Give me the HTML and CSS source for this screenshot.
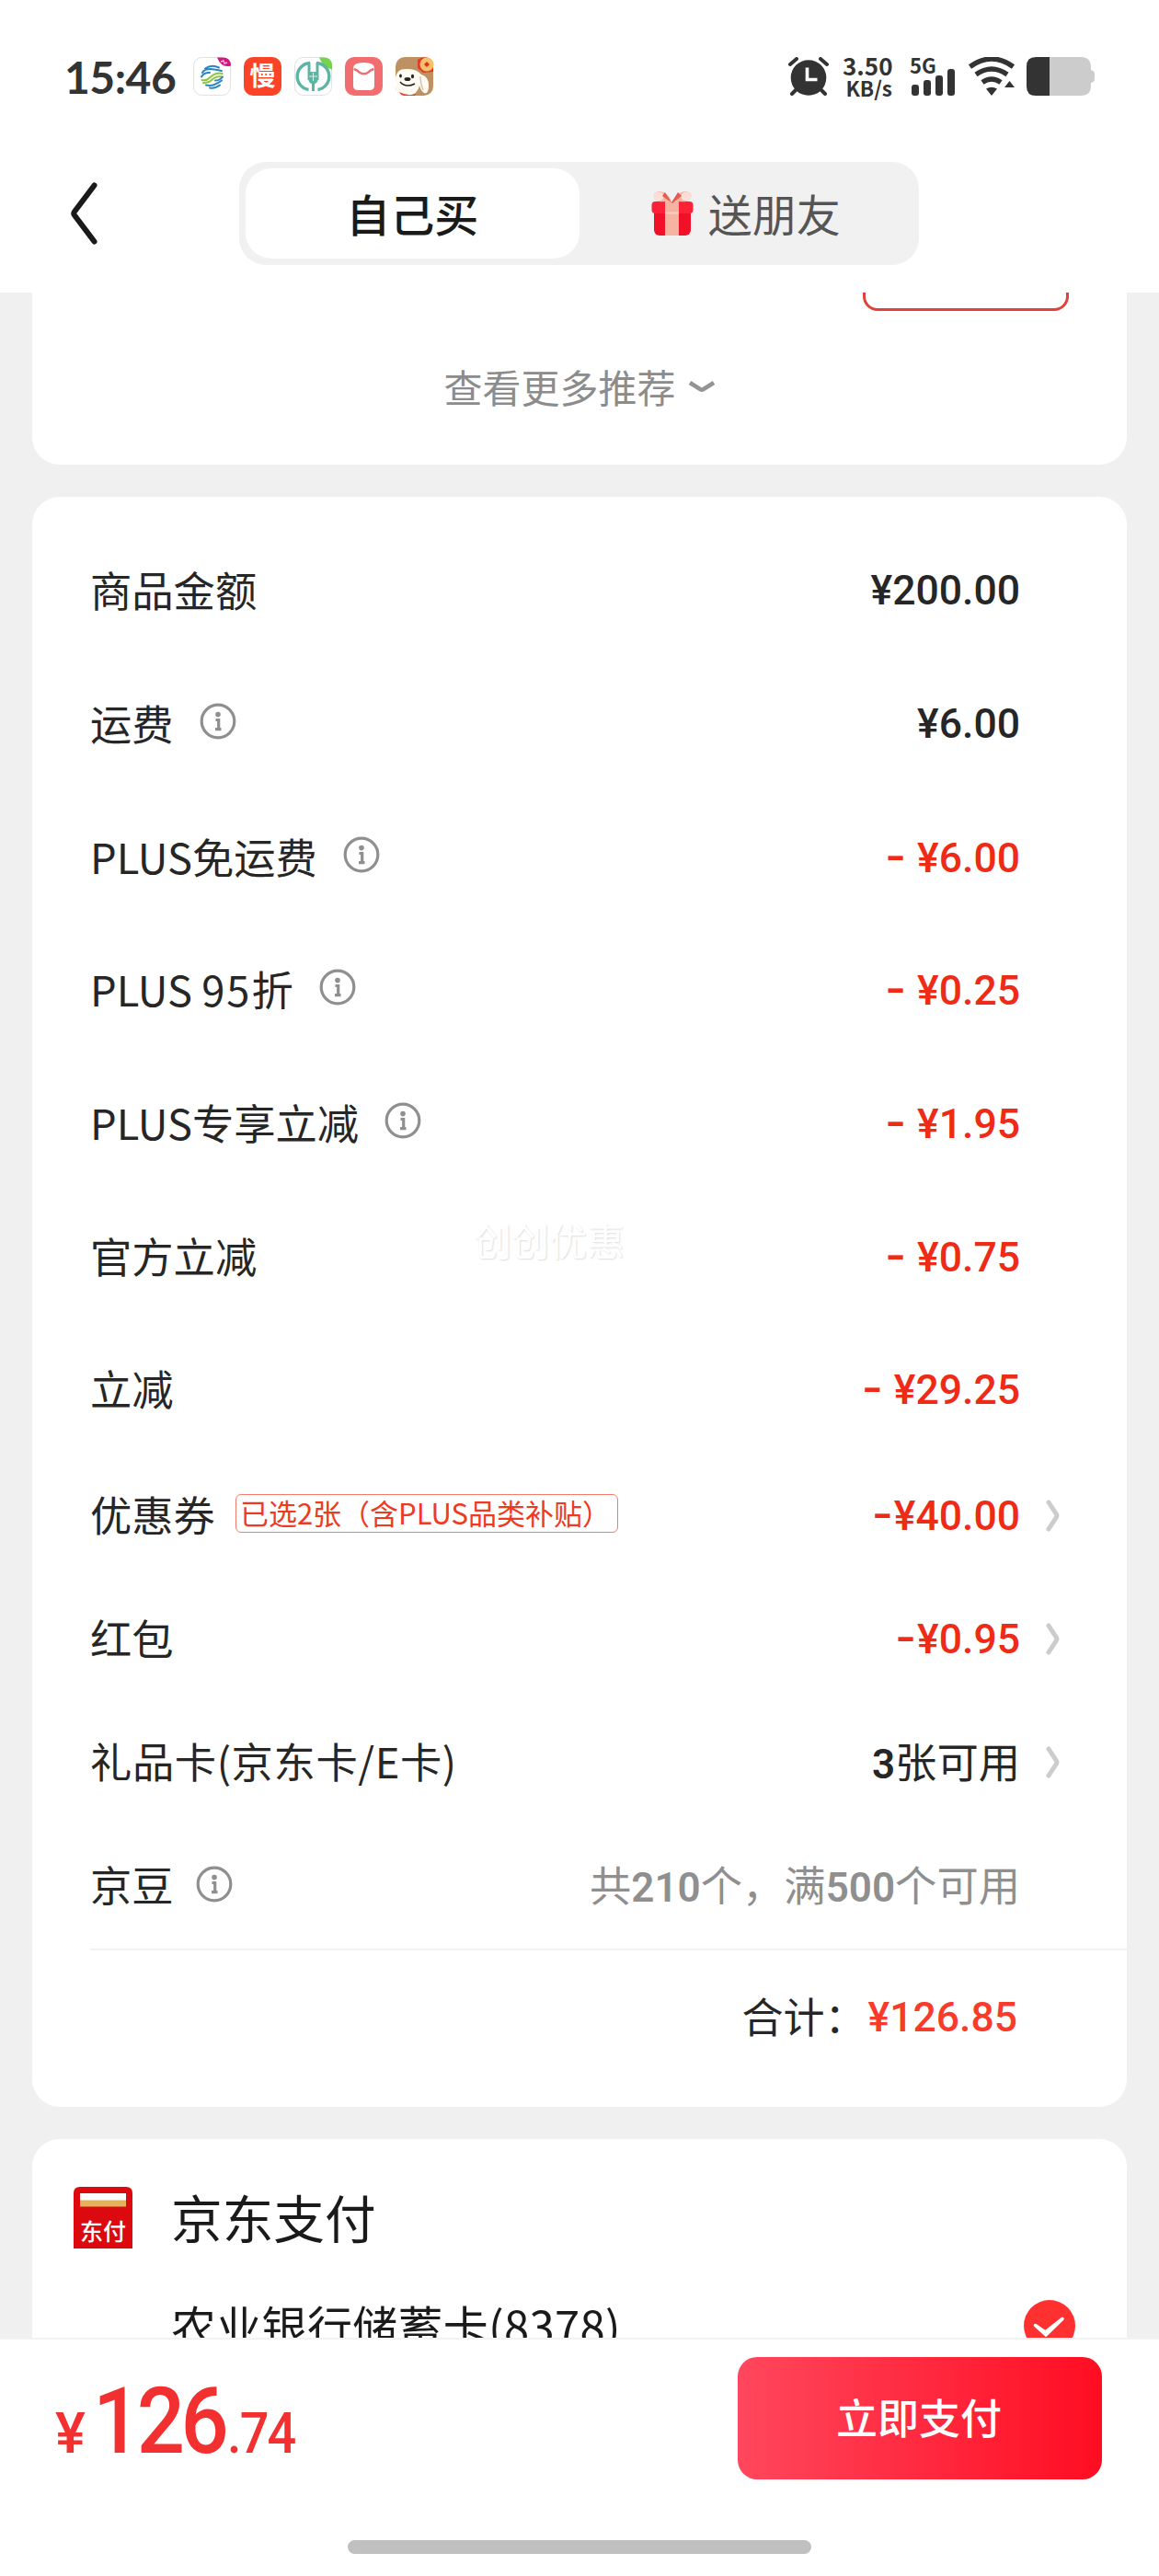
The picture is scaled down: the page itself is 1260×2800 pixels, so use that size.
FILE: index.html
```html
<!DOCTYPE html>
<html lang="zh-CN">

<head>
  <meta charset="UTF-8">
  <meta name="viewport" content="width=device-width, initial-scale=1.0">
  <title>确认订单</title>
  <link rel="stylesheet" href="styles.css">
</head>

<body>
  <svg class="sprite" aria-hidden="true">
    <symbol id="info" viewBox="0 0 40 40">
      <circle cx="20" cy="20" r="17.800" fill="none" stroke="#8f8f8f" stroke-width="3.200" />
      <circle cx="20" cy="12.600" r="2.800" fill="#8f8f8f" />
      <path d="M17.500 18.500h3.200v9.500M17 28.600h6.500" fill="none" stroke="#8f8f8f" stroke-width="3.200" />
    </symbol>
    <symbol id="arrow" viewBox="0 0 15 35">
      <path d="M3 3l8.300 12.700q1.200 1.800 0 3.600L3 32" fill="none" stroke="#ccc" stroke-width="5" stroke-linecap="round" />
    </symbol>
  </svg>

  <header class="header">
    <div class="status">
      <span class="status-time">15:46</span>
      <div class="status-apps">
        <svg viewBox="0 0 41 42">
          <rect x=".5" y=".5" width="40" height="41" rx="9" fill="#fff" stroke="#e2e2e2" />
          <path d="M26 .5h6q9 0 9 9-10 3-15-9z" fill="#d5147f" />
          <path d="M30 5l3-1 1 3 3-1" fill="none" stroke="#f6b5d8" stroke-width="1.4" />
          <g fill="none" stroke-width="2" stroke-linecap="round">
            <path d="M13 12.500q7-5 15-1M10 17q2-4 9-4 8 1 12 2M9 21.500q3-5 9-4.500" stroke="#2a85c2" />
            <path d="M9.500 25q5 1 8.500-2.500t7-4.500 6.500 0M11 28q6 0 9-3t6-3.500 5.500 0" stroke="#8ec63f" />
            <path d="M24 25.500q5 0 8-4M14 30.500q5 1 9-.5t8-4.500M18 33.500q6 1 11-3" stroke="#2a85c2" />
          </g>
        </svg>
        <svg viewBox="0 0 41 42">
          <rect width="41" height="42" rx="10" fill="#fb4327" />
          <text x="20.500" y="31" text-anchor="middle" class="app-man">慢</text>
        </svg>
        <svg viewBox="0 0 41 42">
          <rect x=".5" y=".5" width="40" height="41" rx="9" fill="#fff" stroke="#e2e2e2" />
          <path d="M27 .5h5q9 0 9 9v4Q31 11 27 .5z" fill="#76d24b" />
          <path d="M17 6.500a14.600 14.600 0 0 0-1.500 29M24 6.500a14.600 14.600 0 0 1 1.500 29" fill="none" stroke="#5fb5a4" stroke-width="3.400" />
          <path d="M20.500 17v20M16 6v19M25 6v19" fill="none" stroke="#5fb5a4" stroke-width="3" />
          <path d="M15.500 16h10v9q0 3-5 5-5-2-5-5z" fill="#5fb5a4" />
          <path d="M20.500 17v9M16 21h9" stroke="#d9efe9" stroke-width="1" />
        </svg>
        <svg viewBox="0 0 41 42">
          <rect width="41" height="42" rx="10" fill="#f26d70" />
          <path d="M9 12q0-6 11.500-6T32 12v19q0 5-5 5H14q-5 0-5-5z" fill="#fff" />
          <path d="M9.500 13q4 1 6 3.500 5 3.500 10 0 2-2.500 6-3.500" fill="none" stroke="#f26d70" stroke-width="2.400" />
        </svg>
        <svg viewBox="0 0 41 42">
          <rect width="41" height="42" rx="10" fill="#bd9161" />
          <path d="M0 22q2-10 12-9 10-1 16 6 8 2 8 12t-5 8q-4-3-5-8-2 10-12 11H9Q0 40 0 32z" fill="#fffaf2" />
          <path d="M27 21q0 8 3 15" fill="none" stroke="#d9c3a6" stroke-width="1.500" />
          <path d="M4 38q9 5 18 2l-1 2H10q-4 0-6-4z" fill="#e63b2e" />
          <path d="M24 3Q29-1 36 1q5 2 5 8v7l-11 1-6-5z" fill="#e23b2a" />
          <circle cx="34" cy="8" r="7.500" fill="#f6c269" />
          <path d="M34 5l3 3-3 3-3-3z" fill="#d83325" />
          <ellipse cx="13" cy="24" rx="3.500" ry="2" fill="#252525" />
          <ellipse cx="5.500" cy="20.500" rx="1.400" ry="2" fill="#252525" />
          <ellipse cx="18.500" cy="21" rx="1.600" ry="2.200" fill="#252525" />
          <path d="M5 27q6 7 16 2" fill="none" stroke="#252525" stroke-width="1.400" />
        </svg>
      </div>
      <div class="status-right">
        <svg class="ico-alarm" viewBox="0 0 44 42">
          <circle cx="22" cy="22.500" r="19.300" fill="#333" />
          <path d="M2 8l7-6M42 8l-7-6M9 35l-5 5M35 35l5 5" stroke="#333" stroke-width="4" stroke-linecap="round" />
          <path d="M20.500 11.500v13h11" fill="none" stroke="#fff" stroke-width="3.600" />
        </svg>
        <div class="net-speed"><span>3.50</span><span>KB/s</span></div>
        <div class="signal">
          <span class="signal-5g">5G</span>
          <i class="b1"></i><i class="b2"></i><i class="b3"></i><i class="b4"></i>
        </div>
        <svg class="ico-wifi" viewBox="0 0 52 42">
          <path d="M2.500 10.500Q26-6.500 49.500 10.500M9 19q17-12 34 0M16 27.500q10-7 20 0" fill="none" stroke="#333" stroke-width="5.400" />
          <path d="M20 34.500q6-3.500 12 0l-6 7.500zM40 33l5.500-7L51 33z" fill="#333" />
        </svg>
        <svg class="ico-battery" viewBox="0 0 74 42">
          <path d="M25 0h34q11 0 11 11v3q4 1 4 4v6q0 3-4 4v3q0 11-11 11H25z" fill="#ccc" />
          <path d="M10 0h15v42H10Q0 42 0 32V10Q0 0 10 0z" fill="#333" />
        </svg>
      </div>
    </div>

    <nav class="nav">
      <svg class="nav-back" viewBox="0 0 30 68">
        <path d="M26.500 3.500L5 32q-1.500 2 0 4l21.500 28.500" fill="none" stroke="#1a1a1a" stroke-width="6" stroke-linecap="round" stroke-linejoin="round" />
      </svg>
      <div class="tabs">
        <a class="tab is-active">自己买</a>
        <a class="tab">
          <svg class="ico-gift" viewBox="0 0 46 50">
            <rect x="3" y="17" width="40" height="32" rx="6" fill="#f01028" />
            <rect x=".5" y="12" width="45" height="13" rx="4" fill="#fb2238" />
            <rect x="15" y="12" width="15" height="37" fill="#f5b3a2" />
            <path d="M15 24.500h15" stroke="#f9cfc4" stroke-width="2" />
            <path d="M22 11Q9 14 4 10q-4-8 5-9 8 0 13 10zM24 11q13 3 18-1 4-8-5-9-8 0-13 10z" fill="#f7b4a5" />
            <ellipse cx="8" cy="6.500" rx="5.500" ry="5" fill="#fbded6" />
            <ellipse cx="38" cy="6.500" rx="5.500" ry="5" fill="#fbded6" />
            <path d="M15 2l7 11L29 2l4 4-10 8-11-8z" fill="#e45b4f" />
          </svg>
          <span>送朋友</span>
        </a>
      </div>
    </nav>
  </header>

  <main class="content">
    <section class="card recommend">
      <div class="recommend-btn"></div>
      <a class="more"><span>查看更多推荐</span>
        <svg viewBox="0 0 30 14">
          <path d="M2 3l11.500 7.200q1.500.8 3 0L28 3" fill="none" stroke="#949494" stroke-width="4.600" />
        </svg>
      </a>
    </section>

    <section class="card bill">
      <div class="row">
        <span class="label">商品金额</span>
        <span class="value">¥200.00</span>
      </div>
      <div class="row">
        <span class="label">运费</span>
        <svg class="ico-info"><use href="#info" /></svg>
        <span class="value">¥6.00</span>
      </div>
      <div class="row">
        <span class="label">PLUS免运费</span>
        <svg class="ico-info"><use href="#info" /></svg>
        <span class="value red"><b>-</b> ¥6.00</span>
      </div>
      <div class="row">
        <span class="label">PLUS <span class="off">95</span>折</span>
        <svg class="ico-info"><use href="#info" /></svg>
        <span class="value red"><b>-</b> ¥0.25</span>
      </div>
      <div class="row">
        <span class="label">PLUS专享立减</span>
        <svg class="ico-info"><use href="#info" /></svg>
        <span class="value red"><b>-</b> ¥1.95</span>
      </div>
      <div class="row">
        <span class="label">官方立减</span>
        <span class="value red"><b>-</b> ¥0.75</span>
      </div>
      <div class="row">
        <span class="label">立减</span>
        <span class="value red"><b>-</b> ¥29.25</span>
      </div>
      <div class="row row-link">
        <span class="label">优惠券</span>
        <span class="tag">已选2张（含PLUS品类补贴）</span>
        <span class="value red"><b>-</b>¥40.00</span>
        <svg class="ico-arrow"><use href="#arrow" /></svg>
      </div>
      <div class="row row-link">
        <span class="label">红包</span>
        <span class="value red"><b>-</b>¥0.95</span>
        <svg class="ico-arrow"><use href="#arrow" /></svg>
      </div>
      <div class="row row-link">
        <span class="label label-card">礼品卡(京东卡/E卡)</span>
        <span class="value value-text"><em>3</em>张可用</span>
        <svg class="ico-arrow"><use href="#arrow" /></svg>
      </div>
      <div class="row row-link row-bean">
        <span class="label">京豆</span>
        <svg class="ico-info"><use href="#info" /></svg>
        <span class="value value-text gray">共<em>210</em>个，满<em>500</em>个可用</span>
      </div>
      <div class="total"><span class="total-label">合计：</span><span class="total-num">¥126.85</span></div>
      <span class="watermark">创创优惠</span>
    </section>

    <section class="card pay">
      <div class="pay-head">
        <svg class="ico-pay" viewBox="0 0 64 67">
          <path d="M0 67V7q0-7 7-7h50q7 0 7 7v60z" fill="#dc0a0e" />
          <rect x="7" y="7" width="50" height="8" fill="#fff" />
          <rect x="7" y="14.500" width="50" height="7" fill="#e3b35c" />
          <text x="32" y="58" text-anchor="middle" class="pay-logo">东付</text>
        </svg>
        <h2>京东支付</h2>
      </div>
      <div class="pay-bank">
        <span>农业银行储蓄卡(8378)</span>
        <svg class="ico-check" viewBox="0 0 56 56">
          <circle cx="28" cy="28" r="28" fill="#ff3030" />
          <path d="M12.500 27.500l11 7.500L42 20.500 24 38z" fill="#fff" stroke="#fff" stroke-width="3.600" stroke-linejoin="round" />
        </svg>
      </div>
    </section>
  </main>

  <footer class="footer">
    <div class="footer-bar">
      <div class="price"><span class="price-sign">¥</span><span class="price-int">126</span><span class="price-dec">.74</span></div>
      <button class="pay-btn" type="button">立即支付</button>
    </div>
    <div class="home-bar"></div>
  </footer>
</body>

</html>
```
FILE: styles.css
```css
*,
*::before,
*::after {
  box-sizing: border-box;
}

body {
  display: flex;
  flex-direction: column;
  width: 1260px;
  height: 2800px;
  margin: 0;
  overflow: hidden;
  background-color: #f0f0f0;
  color: #262626;
  font-family: "Noto Sans CJK SC", sans-serif;
  font-size: 45px;
}

svg {
  display: block;
  flex: none;
}

.sprite {
  display: none;
}

/* header */
.header {
  flex: none;
  height: 318px;
  background-color: #fff;
}

.status {
  display: flex;
  align-items: center;
  height: 166px;
  padding: 0 70px;
  color: #333;
}

.status-time {
  width: 140px;
  font-family: Lato, sans-serif;
  font-size: 48px;
  font-weight: 700;
  letter-spacing: -0.5px;
}

.status-apps {
  display: flex;
  gap: 14px;
}

.status-apps svg {
  width: 41px;
  height: 42px;
  overflow: visible;
}

.app-man {
  font-size: 28px;
  font-weight: 700;
  fill: #fff;
}

.status-right {
  display: flex;
  align-items: center;
  margin-left: auto;
}

.ico-alarm {
  width: 44px;
  height: 42px;
}

.net-speed {
  display: flex;
  flex-direction: column;
  width: 54px;
  margin-left: 15px;
  font-size: 26px;
  font-weight: 700;
  line-height: 24px;
  text-align: right;
}

.net-speed span:last-child {
  font-size: 22.500px;
}

.signal {
  position: relative;
  display: flex;
  align-items: flex-end;
  gap: 5px;
  width: 50px;
  height: 42px;
  margin-left: 19px;
  padding-left: 2px;
}

.signal-5g {
  position: absolute;
  left: 0;
  top: -4px;
  font-size: 22px;
  font-weight: 700;
  line-height: 24px;
}

.signal i {
  width: 8px;
  border-radius: 3px;
  background-color: #333;
}

.b1 {
  height: 12px;
}

.b2 {
  height: 17px;
}

.b3 {
  height: 22px;
}

.b4 {
  height: 29px;
}

.ico-wifi {
  width: 52px;
  height: 42px;
  margin-left: 13px;
}

.ico-battery {
  width: 74px;
  height: 42px;
  margin-left: 12px;
}

.nav {
  display: flex;
  align-items: center;
  height: 132px;
  padding-left: 76px;
}

.nav-back {
  width: 30px;
  height: 68px;
}

.tabs {
  display: flex;
  width: 739px;
  height: 112px;
  margin-left: 154px;
  padding: 7px;
  border-radius: 29px;
  background-color: #f1f1f1;
}

.tab {
  display: flex;
  flex: 1;
  align-items: center;
  justify-content: center;
  border-radius: 28px;
  color: #555;
  font-size: 48px;
  line-height: 60px;
}

.tab span {
  margin-bottom: 2px;
}

.tab.is-active {
  padding-bottom: 2px;
  background-color: #fff;
  color: #1a1a1a;
  font-weight: 500;
}

.ico-gift {
  width: 46px;
  height: 50px;
  margin-right: 16px;
}

/* content */
.content {
  display: flex;
  flex: 1;
  flex-direction: column;
  gap: 35px;
  min-height: 0;
  padding: 0 35px;
  overflow: hidden;
}

.card {
  flex: none;
  border-radius: 30px;
  background-color: #fff;
}

.recommend {
  height: 237px;
  margin-top: -50px;
}

.recommend-btn {
  width: 224px;
  height: 70px;
  margin-left: 903px;
  border: 3px solid #e2403a;
  border-radius: 16px;
}

.more {
  display: flex;
  align-items: center;
  justify-content: center;
  gap: 13px;
  height: 60px;
  margin-top: 53px;
  color: #8c8c8c;
  font-size: 42px;
}

.more span {
  margin-bottom: 3px;
}

.more svg {
  width: 30px;
  height: 14px;
  margin-bottom: 2px;
}

.bill {
  position: relative;
  height: 1750px;
  padding: 30px 0 0 63px;
}

.row {
  display: flex;
  align-items: center;
  height: 144.700px;
  padding-right: 116px;
}

.row-link {
  height: 134px;
  padding-right: 73px;
  padding-bottom: 5px;
}

.label {
  margin-bottom: 4px;
  font-size: 45.300px;
}

.label-card {
  letter-spacing: 0.6px;
}

.off {
  letter-spacing: 2px;
}

.ico-info {
  width: 40px;
  height: 40px;
  margin: -6px 0 0 28px;
}

.row-bean {
  height: 135px;
  padding-right: 116px;
  border-bottom: 2px solid #f3f3f3;
}

.row-bean .ico-info {
  margin: -2px 0 0 24px;
}

.tag {
  height: 42px;
  margin: -4px 0 0 22px;
  padding: 0 7px 0 4px;
  border: 1px solid #f47a6a;
  border-radius: 6px;
  color: #ee3a22;
  font-size: 31px;
  line-height: 37px;
}

.value {
  margin-left: auto;
  font-family: Roboto, "Noto Sans CJK SC", sans-serif;
  font-size: 44.500px;
  font-weight: 500;
}

.value b {
  display: inline-block;
  margin-right: 1px;
  font-family: Inter, sans-serif;
  font-size: 50px;
  font-weight: 500;
  line-height: 1;
}

.value-text {
  margin-bottom: 4px;
  font-size: 45.300px;
  font-weight: 400;
}

.value-text em {
  font-size: 44px;
  font-style: normal;
  font-weight: 600;
}

.red {
  color: #ee2b16;
}

.gray {
  color: #8f8f8f;
}

.ico-arrow {
  width: 15px;
  height: 35px;
  margin: 0 0 0 28px;
}

.total {
  display: flex;
  align-items: center;
  justify-content: flex-end;
  height: 146px;
  padding-right: 119px;
}

.total-label {
  margin: 0 2px 4px 0;
}

.total-num {
  color: #f83b2b;
  font-family: Roboto, sans-serif;
  font-size: 44.500px;
  font-weight: 500;
}

.watermark {
  position: absolute;
  left: 480px;
  top: 777px;
  color: #fff;
  font-size: 41px;
  line-height: 60px;
  text-shadow: 1px 1px 2px #ddd;
}

.pay {
  height: 400px;
  padding: 52px 56px 0 45px;
}

.pay-head {
  display: flex;
  align-items: center;
  height: 67px;
}

.ico-pay {
  width: 64px;
  height: 67px;
}

.pay-logo {
  font-size: 25px;
  font-weight: 500;
  fill: #fff;
}

.pay-head h2 {
  margin: 0 0 4px 42px;
  color: #1a1a1a;
  font-size: 55.700px;
  font-weight: 400;
  line-height: 67px;
}

.pay-bank {
  display: flex;
  align-items: center;
  justify-content: space-between;
  height: 56px;
  margin-top: 56px;
  padding-left: 106px;
  color: #1a1a1a;
  font-size: 49px;
  letter-spacing: 0.3px;
}

.pay-bank span {
  margin-bottom: 4px;
}

.ico-check {
  width: 56px;
  height: 56px;
}

/* footer */
.footer {
  flex: none;
  height: 259px;
  border-top: 2px solid #f3f3f3;
  background-color: #fff;
}

.footer-bar {
  display: flex;
  justify-content: space-between;
  height: 218px;
  padding: 19px 62px 0 60px;
}

.price {
  display: flex;
  align-items: baseline;
  color: #f2302f;
  font-family: Roboto, sans-serif;
  font-size: 62px;
  font-weight: 500;
  line-height: 140px;
}

/* condensed digits */
.price-int {
  width: 146px;
  margin-left: 8px;
  font-size: 101px;
  letter-spacing: -5px;
  transform: scaleX(0.91);
  transform-origin: left;
}

.price-dec {
  letter-spacing: -2px;
  transform: scaleX(0.9);
  transform-origin: left;
}

.pay-btn {
  width: 396px;
  height: 133px;
  padding: 0 2px 5px 0;
  border: 0;
  border-radius: 21px;
  background: linear-gradient(to right, #ff475d, #ff0d22);
  color: #fff;
  font-family: inherit;
  font-size: 45px;
  font-weight: 500;
}

.home-bar {
  width: 504px;
  height: 15px;
  margin: 0 auto;
  border-radius: 8px;
  background-color: #c0c0c0;
}
```
